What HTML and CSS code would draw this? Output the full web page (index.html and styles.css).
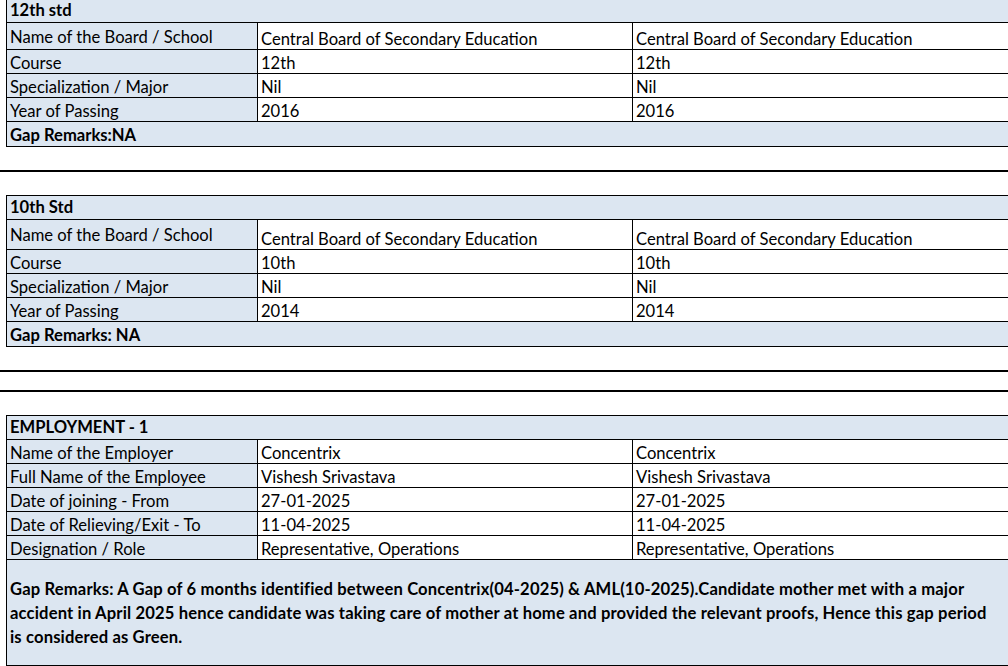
FILE: index.html
```html
<!DOCTYPE html>
<html lang="en">
<head>
<meta charset="utf-8">
<title>Verification Sheet</title>
<link rel="stylesheet" href="styles.css">
</head>
<body>
<main class="sheet">
  <section class="tbl tbl-first">
    <div class="cell head">12th std</div>
    <div class="cell label tall27">Name of the Board / School</div>
    <div class="cell value tall27">Central Board of Secondary Education</div>
    <div class="cell value tall27">Central Board of Secondary Education</div>
    <div class="cell label">Course</div>
    <div class="cell value">12th</div>
    <div class="cell value">12th</div>
    <div class="cell label">Specialization / Major</div>
    <div class="cell value">Nil</div>
    <div class="cell value">Nil</div>
    <div class="cell label">Year of Passing</div>
    <div class="cell value">2016</div>
    <div class="cell value">2016</div>
    <div class="cell remark">Gap Remarks:NA</div>
  </section>

  <div class="gap"></div>
  <hr class="rule">
  <div class="gap"></div>

  <section class="tbl">
    <div class="cell head">10th Std</div>
    <div class="cell label tall30">Name of the Board / School</div>
    <div class="cell value tall30">Central Board of Secondary Education</div>
    <div class="cell value tall30">Central Board of Secondary Education</div>
    <div class="cell label">Course</div>
    <div class="cell value">10th</div>
    <div class="cell value">10th</div>
    <div class="cell label">Specialization / Major</div>
    <div class="cell value">Nil</div>
    <div class="cell value">Nil</div>
    <div class="cell label">Year of Passing</div>
    <div class="cell value">2014</div>
    <div class="cell value">2014</div>
    <div class="cell remark">Gap Remarks: NA</div>
  </section>

  <div class="gap"></div>
  <hr class="rule">
  <div class="gap-small"></div>
  <hr class="rule">
  <div class="gap"></div>

  <section class="tbl">
    <div class="cell head">EMPLOYMENT - 1</div>
    <div class="cell label">Name of the Employer</div>
    <div class="cell value">Concentrix</div>
    <div class="cell value">Concentrix</div>
    <div class="cell label">Full Name of the Employee</div>
    <div class="cell value">Vishesh Srivastava</div>
    <div class="cell value">Vishesh Srivastava</div>
    <div class="cell label">Date of joining - From</div>
    <div class="cell value">27-01-2025</div>
    <div class="cell value">27-01-2025</div>
    <div class="cell label">Date of Relieving/Exit - To</div>
    <div class="cell value">11-04-2025</div>
    <div class="cell value">11-04-2025</div>
    <div class="cell label">Designation / Role</div>
    <div class="cell value">Representative, Operations</div>
    <div class="cell value">Representative, Operations</div>
    <div class="cell remark remark-long">Gap Remarks: A Gap of 6 months identified between Concentrix(04-2025) &amp; AML(10-2025).Candidate mother met with a major<br>accident in April 2025 hence candidate was taking care of mother at home and provided the relevant proofs, Hence this gap period<br>is considered as Green.</div>
  </section>
</main>
</body>
</html>
```

FILE: styles.css
```css
html, body {
  margin: 0;
  padding: 0;
  background: #ffffff;
}

body {
  overflow: hidden;
  font-family: "Lato", "Open Sans", "Liberation Sans", sans-serif;
  font-size: 16.6px;
  color: #000000;
}

.sheet {
  width: 1040px;
}

.tbl {
  display: grid;
  grid-template-columns: 251px 375px 400px;
  grid-auto-rows: auto;
  margin-left: 6px;
  border-left: 1px solid #000;
  border-top: 1px solid #000;
  width: 1027px;
  box-sizing: border-box;
}

.tbl-first {
  margin-top: -2px;
}

.cell {
  box-sizing: border-box;
  height: 24px;
  border-right: 1px solid #000;
  border-bottom: 1px solid #000;
  padding: 0 3px 0 3px;
  line-height: 20px;
  white-space: nowrap;
  display: flex;
  align-items: flex-end;
}

.head {
  grid-column: 1 / -1;
  background: #dce6f1;
  font-weight: 700;
  padding-bottom: 2px;
}

.label {
  background: #dce6f1;
}

.value {
  background: #ffffff;
}

.tall27 {
  height: 27px;
}

.tall30 {
  height: 30px;
}

.label.tall27,
.label.tall30 {
  align-items: center;
  padding-top: 1px;
}

.remark {
  grid-column: 1 / -1;
  background: #dce6f1;
  font-weight: 700;
  height: 25px;
  padding-bottom: 1px;
}

.remark-long {
  height: 106px;
  line-height: 24px;
  align-items: center;
  padding: 0 3px;
  letter-spacing: 0.15px;
}

.gap {
  height: 23px;
}

.gap-small {
  height: 18px;
}

.rule {
  margin: 0;
  border: 0;
  height: 2px;
  background: #000;
  width: 100%;
}
```
